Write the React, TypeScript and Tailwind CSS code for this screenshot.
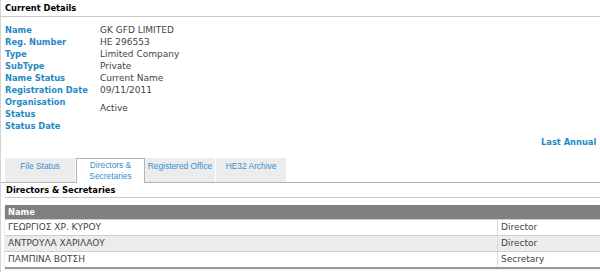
const details: { label: string[]; value: string }[] = [
  { label: ["Name"], value: "GK GFD LIMITED" },
  { label: ["Reg. Number"], value: "HE 296553" },
  { label: ["Type"], value: "Limited Company" },
  { label: ["SubType"], value: "Private" },
  { label: ["Name Status"], value: "Current Name" },
  { label: ["Registration Date"], value: "09/11/2011" },
  { label: ["Organisation", "Status"], value: "Active" },
  { label: ["Status Date"], value: "" },
];

const tabs = [
  { title: ["File Status"], active: false },
  { title: ["Directors &", "Secretaries"], active: true },
  { title: ["Registered Office"], active: false },
  { title: ["HE32 Archive"], active: false },
];

const officers = [
  { name: "ΓΕΩΡΓΙΟΣ ΧΡ. ΚΥΡΟΥ", role: "Director" },
  { name: "ΑΝΤΡΟΥΛΑ ΧΑΡΙΛΑΟΥ", role: "Director" },
  { name: "ΠΑΜΠΙΝΑ ΒΟΤΣΗ", role: "Secretary" },
];

export default function App() {
  return (
    <div className="h-[272px] w-[600px] overflow-hidden border-l border-[#d4d4d4] bg-white font-['DejaVu_Sans',sans-serif] text-[9px]">
      <div className="flex h-[17px] items-center border-b border-[#c8c8c8] px-[4px] text-[8.3px] font-bold text-black">
        Current Details
      </div>

      <div className="pt-[7px]">
        {details.map((row) => (
          <div key={row.label[0]} className="flex items-center leading-[12px]">
            <div className="w-[99px] pl-[4px] text-[8.3px] font-bold text-[#1f8bc4]">
              {row.label.map((line) => (
                <div key={line}>{line}</div>
              ))}
            </div>
            <div className="text-[#444]">{row.value}</div>
          </div>
        ))}
      </div>

      <div className="mt-[4px] pl-[540px] text-[8.3px] leading-[12px] font-bold whitespace-nowrap text-[#1f8bc4]">
        Last Annual
      </div>

      <div className="mt-[10px] flex border-b border-[#b4b4b4] pl-[4px] font-['Liberation_Sans',sans-serif] text-[8.4px] leading-[11px] text-[#3592d2]">
        {tabs.map((tab) => (
          <div
            key={tab.title[0]}
            className={
              tab.active
                ? "-mb-px flex h-[25px] w-[69px] flex-col items-center justify-center border-x border-t border-[#b4b4b4] bg-white"
                : "mr-px flex h-[24px] w-[70px] flex-col items-center bg-[#ececec] pt-[3px]"
            }
          >
            {tab.title.map((line) => (
              <div key={line}>{line}</div>
            ))}
          </div>
        ))}
      </div>

      <div className="ml-[4px] flex h-[15px] items-center border-b border-[#c8c8c8] px-[1px] text-[8.3px] font-bold text-black">
        Directors &amp; Secretaries
      </div>

      <div className="mt-[7px] ml-[4px] shadow-[0_2px_1px_#9a9a9a]">
        <div className="flex h-[14px] items-center bg-[#808080] px-[3px] text-[8.3px] font-bold text-white">
          Name
        </div>
        {officers.map((o, i) => (
          <div
            key={o.name}
            className={`flex h-[16px] items-center border-t border-[#cfcfcf] text-[#444] ${
              i % 2 === 1 ? "bg-[#ececec]" : "bg-white"
            }`}
          >
            <div className="w-[492px] px-[3px]">{o.name}</div>
            <div className="flex h-full items-center border-l border-[#dcdcdc] px-[3px]">
              {o.role}
            </div>
          </div>
        ))}
      </div>
    </div>
  );
}
